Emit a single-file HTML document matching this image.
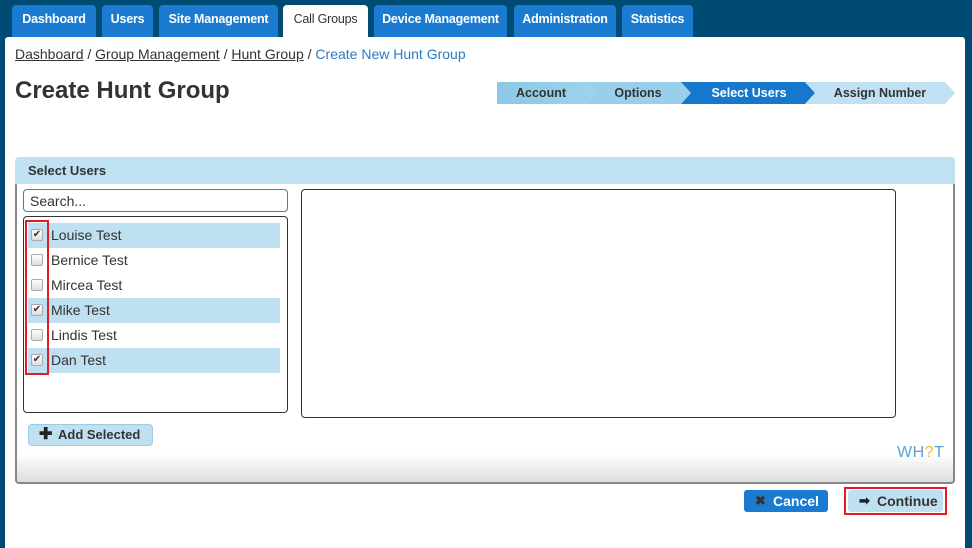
<!DOCTYPE html>
<html><head><meta charset="utf-8"><style>
*{box-sizing:border-box;margin:0;padding:0}
body{width:972px;height:548px;background:#004b73;font-family:"Liberation Sans",Arial,sans-serif;position:relative;overflow:hidden}
.a{position:absolute}
.tab{position:absolute;top:5px;height:33px;background:#1a7bd0;color:#fff;font-weight:bold;font-size:12.5px;border-radius:4px 4px 0 0;text-align:center;line-height:28px;letter-spacing:-0.2px}
.main{position:absolute;left:5px;top:37px;width:960px;height:511px;background:#fff;border-radius:3px 3px 0 0}
.bc{left:15px;top:46px;font-size:14px;color:#333}
.bc u{color:#333}
.step{position:absolute;top:82px;height:22px;font-size:12.5px;font-weight:bold;line-height:22px;text-align:center;color:#333}
.row{position:absolute;left:28px;width:252px;height:25px;font-size:14px;color:#333;line-height:25px;padding-left:23px}
.row.s{background:#bfe0f1}
.cb{position:absolute;left:3px;top:6px;width:12px;height:12px;border:1px solid #aaa;border-radius:2px;background:linear-gradient(#fff,#ddd);font-size:10px;line-height:10px;text-align:center;color:#333}
</style></head><body>
<div class="tab" style="left:12px;width:84px">Dashboard</div>
<div class="tab" style="left:102px;width:51px">Users</div>
<div class="tab" style="left:159px;width:119px">Site Management</div>
<div class="tab" style="left:283px;width:85px;background:#fff;color:#333;font-weight:normal">Call Groups</div>
<div class="tab" style="left:374px;width:133px">Device Management</div>
<div class="tab" style="left:514px;width:102px">Administration</div>
<div class="tab" style="left:622px;width:71px">Statistics</div>
<div class="main"></div>
<div class="a bc"><u>Dashboard</u> / <u>Group Management</u> / <u>Hunt Group</u> / <span style="color:#2a7bc4">Create New Hunt Group</span></div>
<div class="a" style="left:15px;top:77px;font-size:24px;font-weight:bold;color:#333">Create Hunt Group</div>
<svg class="a" style="left:497px;top:82px" width="460" height="22">
<defs><linearGradient id="g1" x1="0" x2="1"><stop offset="0" stop-color="#8cc8e6"/><stop offset="1" stop-color="#9ed2ec"/></linearGradient></defs>
<polygon points="0,0 88,0 98,11 88,22 0,22" fill="url(#g1)"/>
<polygon points="88,0 184,0 194,11 184,22 88,22 98,11" fill="#99cfea"/>
<polygon points="184,0 308,0 318,11 308,22 184,22 194,11" fill="#1678cc"/>
<polygon points="308,0 448,0 458,11 448,22 308,22 318,11" fill="#bfe1f3"/>
</svg>
<div class="step" style="left:497px;width:88px">Account</div>
<div class="step" style="left:590px;width:96px">Options</div>
<div class="step" style="left:690px;width:118px;color:#fff">Select Users</div>
<div class="step" style="left:812px;width:136px">Assign Number</div>
<div class="a" style="left:15px;top:157px;width:940px;height:28px;background:#bfe1f2;border-radius:4px 4px 0 0;font-size:13px;font-weight:bold;color:#333;line-height:27px;padding-left:13px">Select Users</div>
<div class="a" style="left:15px;top:184px;width:940px;height:300px;border:2px solid #888;border-top:none;border-radius:0 0 4px 4px;background:linear-gradient(#fff 0,#fff 270px,#ddd 298px)"></div>
<div class="a" style="left:23px;top:189px;width:265px;height:23px;border:1px solid #3b7fc0;border-radius:4px;font-size:14px;color:#333;padding:3px 6px">Search...</div>
<div class="a" style="left:23px;top:216px;width:265px;height:197px;border:1px solid #333;border-radius:4px"></div>
<div class="row s" style="top:223px"><div class="cb">✔</div>Louise Test</div>
<div class="row" style="top:248px"><div class="cb"></div>Bernice Test</div>
<div class="row" style="top:273px"><div class="cb"></div>Mircea Test</div>
<div class="row s" style="top:298px"><div class="cb">✔</div>Mike Test</div>
<div class="row" style="top:323px"><div class="cb"></div>Lindis Test</div>
<div class="row s" style="top:348px"><div class="cb">✔</div>Dan Test</div>
<div class="a" style="left:25px;top:220px;width:24px;height:155px;border:2px solid #e31b23"></div>
<div class="a" style="left:301px;top:189px;width:595px;height:229px;border:1px solid #333;border-radius:4px"></div>
<div class="a" style="left:28px;top:424px;width:125px;height:22px;background:#bfe0f1;border:1px solid #9dcbe6;border-radius:4px;font-size:13px;font-weight:bold;color:#333;line-height:20px;padding-left:29px">Add Selected<span class="a" style="left:10px;top:0;font-size:16px;color:#222">✚</span></div>
<div class="a" style="left:897px;top:444px;font-size:16px;color:#5aa3d0;letter-spacing:0.5px">WH<span style="color:#f5b82e">?</span>T</div>
<div class="a" style="left:744px;top:490px;width:84px;height:22px;background:#1a7bd0;border-radius:3px;color:#fff;font-size:14px;font-weight:bold;line-height:22px;padding-left:29px">Cancel<span class="a" style="left:11px;top:0;color:#333;font-size:13px">✖</span></div>
<div class="a" style="left:844px;top:487px;width:103px;height:28px;border:2px solid #e31b23"></div>
<div class="a" style="left:848px;top:490px;width:95px;height:22px;background:#bfe0f1;border-radius:3px;color:#333;font-size:14px;font-weight:bold;line-height:22px;padding-left:29px">Continue<span class="a" style="left:11px;top:0;color:#222;font-size:13px">➡</span></div>
</body></html>
